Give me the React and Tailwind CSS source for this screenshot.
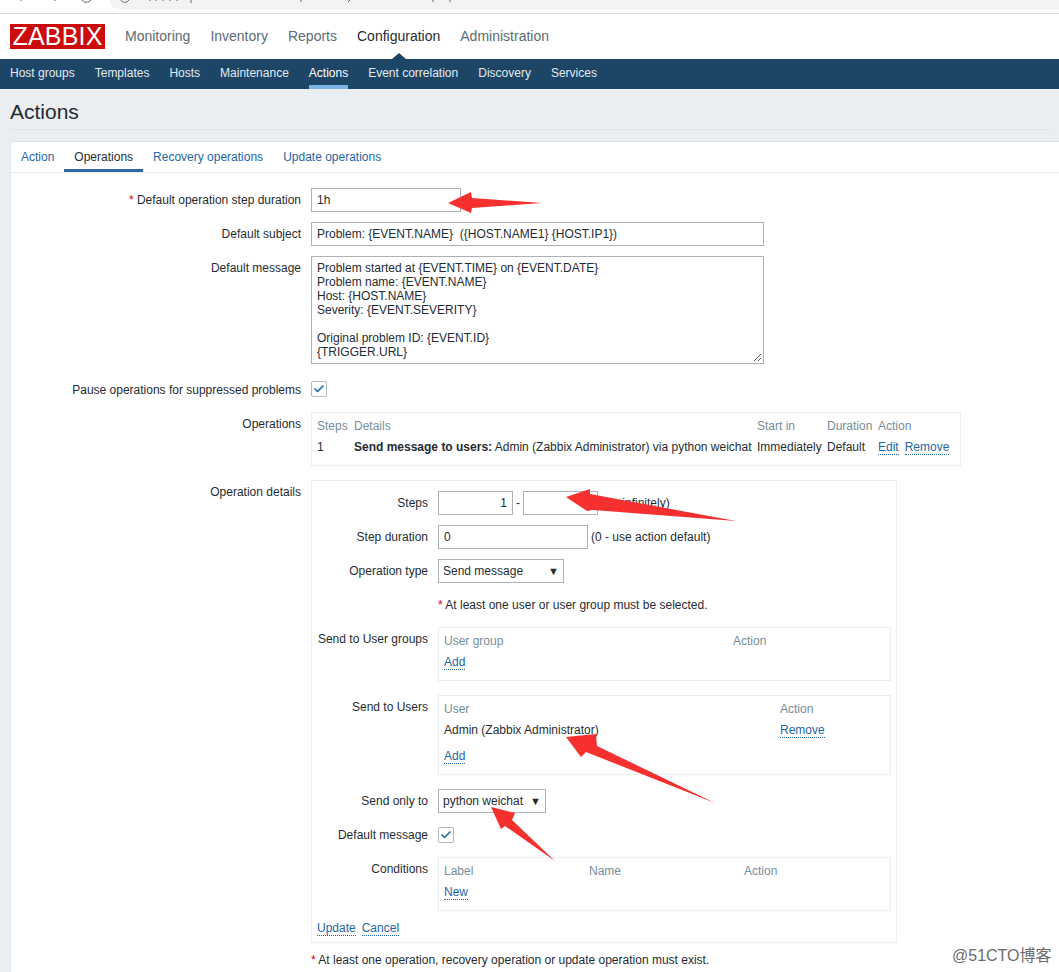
import { Check } from 'lucide-react'

const topMenu = ['Monitoring', 'Inventory', 'Reports', 'Configuration', 'Administration']
const subMenu = ['Host groups', 'Templates', 'Hosts', 'Maintenance', 'Actions', 'Event correlation', 'Discovery', 'Services']
const tabs = ['Action', 'Operations', 'Recovery operations', 'Update operations']
const messageLines = [
  'Problem started at {EVENT.TIME} on {EVENT.DATE}',
  'Problem name: {EVENT.NAME}',
  'Host: {HOST.NAME}',
  'Severity: {EVENT.SEVERITY}',
  '\u00a0',
  'Original problem ID: {EVENT.ID}',
  '{TRIGGER.URL}',
]

function Link({ children }) {
  return <span className="text-[#1f65a6] border-b border-dotted border-[#1f65a6]">{children}</span>
}

function Field({ className = '', children }) {
  return (
    <div className={`h-6 shrink-0 border border-[#acb1b4] bg-white px-[5px] leading-[22px] whitespace-pre ${className}`}>
      {children}
    </div>
  )
}

function Select({ className = '', children }) {
  return (
    <div className={`h-6 shrink-0 border border-[#acb1b4] bg-white pl-[4px] pr-[4px] leading-[22px] flex justify-between ${className}`}>
      <span>{children}</span>
      <span className="text-[11px]">▼</span>
    </div>
  )
}

function Checkbox() {
  return (
    <div className="w-4 h-4 shrink-0 border border-[#acbbc2] rounded-[2px] bg-white flex items-center justify-center">
      <Check size={12} strokeWidth={3.5} className="text-[#2a6aa5]" />
    </div>
  )
}

function Row({ label, required, inner, className = '', labelClass = 'pt-[5px]', children }) {
  return (
    <div className={`flex gap-[10px] ${className}`}>
      <div className={`shrink-0 text-right whitespace-nowrap ${inner ? 'w-[116px]' : 'w-[290px]'} ${labelClass}`}>
        {required && <span className="text-[#dc0000]">* </span>}
        {label}
      </div>
      {children}
    </div>
  )
}

// bordered box round the small lists, all of them share the same padding
function ListBox({ className = '', children }) {
  return <div className={`border border-[#ebeef0] pt-[6px] pb-[11px] px-[5px] ${className}`}>{children}</div>
}

export default function App() {
  return (
    <div className="relative h-[972px] w-[1059px] overflow-hidden bg-[#ebeef0] text-[12px] leading-[14px] text-[#1f2c33] font-['Liberation_Sans',Arial,sans-serif]">
      {/* cropped browser toolbar, only the bottom of its icons shows */}
      <div className="relative h-[14px] bg-white border-b border-[#d8dadc] pl-[110px]">
        <div className="h-[9px] bg-[#f1f3f4] rounded-bl-[8px]" />
        <svg className="absolute left-0 top-0" width="500" height="6" fill="none" stroke="#666" strokeWidth="1">
          <path d="M21 0v1M55 0v1M82 0c1 3 7 3 9 0M121 0c1 3 6 3 8 0M150 0v1M156 0v1M163 0v1M170 0v1M177 0v1M191 0v3M301 0v2M350 0l-2 2M433 0v2M450 0v2" />
        </svg>
      </div>

      {/* main menu */}
      <div className="h-[45px] bg-white flex items-center pl-[10px]">
        <div className="w-[95px] h-[25px] bg-[#cc0c0c] text-white text-[25px] leading-[25px] text-center tracking-[0.2px]">ZABBIX</div>
        <div className="flex ml-[10px] mt-[-2px] text-[14px] text-[#5b6b73]">
          {topMenu.map(item => (
            <div key={item} className={`px-[10px] relative ${item === 'Configuration' ? 'text-[#1f2c33]' : ''}`}>
              {item}
            </div>
          ))}
        </div>
      </div>

      {/* sub menu */}
      <div className="relative h-[30px] bg-[#1c4566] flex pl-0 text-[#e3ebf2]">
        <div className="absolute left-[392px] top-[-6px] w-0 h-0 border-x-[7px] border-x-transparent border-b-[6px] border-b-[#1c4566]" />
        {subMenu.map(item => (
          <div key={item} className={`px-[10px] pt-[7px] ${item === 'Actions' ? 'text-white' : ''}`}>
            <div className={`h-[23px] ${item === 'Actions' ? 'border-b-4 border-[#7cb5e6]' : ''}`}>{item}</div>
          </div>
        ))}
      </div>

      {/* title */}
      <div className="h-[41px] mx-[10px] border-b border-[#e2e5e7] pt-[11px] text-[21px] leading-[24px]">Actions</div>

      {/* panel */}
      <div className="mt-[11px] ml-[10px] bg-white border border-[#e2e5e7] border-r-0 h-[900px]">
        <div className="h-[31px] flex border-b border-[#ebeef0] text-[#1f65a6]">
          {tabs.map(tab => (
            <div key={tab} className={`px-[10px] pt-[8px] ${tab === 'Operations' ? 'text-[#1f2c33] h-[30px] border-b-[3px] border-[#2c6ba8]' : ''}`}>
              {tab}
            </div>
          ))}
        </div>

        <div className="pt-[15px]">
          <Row label="Default operation step duration" required>
            <Field className="w-[150px]">1h</Field>
          </Row>
          <Row label="Default subject" className="mt-[10px]">
            <Field className="w-[453px]">{'Problem: {EVENT.NAME}  ({HOST.NAME1} {HOST.IP1})'}</Field>
          </Row>
          <Row label="Default message" className="mt-[10px]">
            <div className="relative w-[453px] h-[108px] border border-[#acb1b4] px-[5px] pt-[4px]">
              {messageLines.map((line, i) => <div key={i}>{line}</div>)}
              <svg className="absolute right-[1px] bottom-[1px]" width="9" height="9" viewBox="0 0 9 9" stroke="#555" fill="none">
                <path d="M1 8 8 1M5 8 8 5" />
              </svg>
            </div>
          </Row>
          <Row label="Pause operations for suppressed problems" className="mt-[17px]" labelClass="pt-[2px]">
            <Checkbox />
          </Row>
          <Row label="Operations" className="mt-[15px]">
            <ListBox className="w-[650px] h-[54px]">
              <div className="grid grid-cols-[37px_403px_70px_51px_auto] gap-y-[7px] whitespace-nowrap">
                <div className="text-[#768d99]">Steps</div>
                <div className="text-[#768d99]">Details</div>
                <div className="text-[#768d99]">Start in</div>
                <div className="text-[#768d99]">Duration</div>
                <div className="text-[#768d99]">Action</div>
                <div>1</div>
                <div><b>Send message to users:</b> Admin (Zabbix Administrator) via python weichat</div>
                <div>Immediately</div>
                <div>Default</div>
                <div className="flex gap-[6px]"><Link>Edit</Link><Link>Remove</Link></div>
              </div>
            </ListBox>
          </Row>

          <Row label="Operation details" className="mt-[14px]">
            <div className="w-[586px] border border-[#ebeef0] pt-[10px] pb-[6px]">
              <Row label="Steps" inner>
                <div className="flex items-center">
                  <Field className="w-[75px] text-right">1</Field>
                  <span className="w-[10px] text-center">-</span>
                  <Field className="w-[75px]" />
                  <span className="ml-[3px]">(0 - infinitely)</span>
                </div>
              </Row>
              <Row label="Step duration" inner className="mt-[10px]">
                <div className="flex items-center">
                  <Field className="w-[150px]">0</Field>
                  <span className="ml-[3px]">(0 - use action default)</span>
                </div>
              </Row>
              <Row label="Operation type" inner className="mt-[10px]">
                <Select className="w-[126px]">Send message</Select>
              </Row>
              <Row label="" inner className="mt-[15px]" labelClass="">
                <div><span className="text-[#dc0000]">*</span> At least one user or user group must be selected.</div>
              </Row>
              <Row label="Send to User groups" inner className="mt-[15px]">
                <ListBox className="w-[453px]">
                  <div className="grid grid-cols-[289px_auto] text-[#768d99]">
                    <div>User group</div>
                    <div>Action</div>
                  </div>
                  <div className="mt-[7px]"><Link>Add</Link></div>
                </ListBox>
              </Row>
              <Row label="Send to Users" inner className="mt-[14px]">
                <ListBox className="w-[453px]">
                  <div className="grid grid-cols-[336px_auto] gap-y-[7px]">
                    <div className="text-[#768d99]">User</div>
                    <div className="text-[#768d99]">Action</div>
                    <div>Admin (Zabbix Administrator)</div>
                    <div><Link>Remove</Link></div>
                  </div>
                  <div className="mt-[12px]"><Link>Add</Link></div>
                </ListBox>
              </Row>
              <Row label="Send only to" inner className="mt-[14px]">
                <Select className="w-[108px]">python weichat</Select>
              </Row>
              <Row label="Default message" inner className="mt-[14px]" labelClass="pt-px">
                <Checkbox />
              </Row>
              <Row label="Conditions" inner className="mt-[14px]">
                <ListBox className="w-[453px]">
                  <div className="grid grid-cols-[145px_155px_auto] text-[#768d99]">
                    <div>Label</div>
                    <div>Name</div>
                    <div>Action</div>
                  </div>
                  <div className="mt-[7px]"><Link>New</Link></div>
                </ListBox>
              </Row>
              <div className="mt-[10px] pl-[5px] flex gap-[6px]">
                <Link>Update</Link>
                <Link>Cancel</Link>
              </div>
            </div>
          </Row>

          <div className="mt-[10px] ml-[300px]">
            <span className="text-[#dc0000]">*</span> At least one operation, recovery operation or update operation must exist.
          </div>
        </div>
      </div>

      {/* red annotation arrows pasted over the screenshot */}
      <svg className="absolute inset-0 pointer-events-none" width="1059" height="972" fill="#f5302f">
        <polygon points="448,203 471,192 472,198 542,203 472,208 471,213" />
        <polygon points="566,497 590,489 590,494 736,521 593,510 587,511" />
        <polygon points="566,737 596,734 597,746 715,803 586,752 581,757" />
        <polygon points="491,807 515,813 512,820 555,861 505,826 501,829" />
      </svg>

      {/* blog watermark */}
      <div className="absolute left-[952px] top-[946px] text-[16px] leading-[20px] text-[#6b6b6b] font-['Liberation_Sans','Noto_Sans_CJK_SC',sans-serif]">
        @51CTO博客
      </div>
    </div>
  )
}
